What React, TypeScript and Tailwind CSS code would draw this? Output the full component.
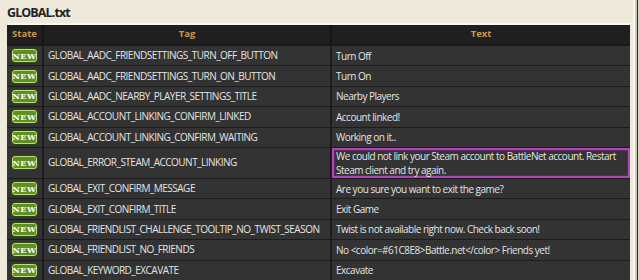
import React from "react";

const rows: { tag: string; text: string; tall?: boolean; hl?: boolean }[] = [
  { tag: "GLOBAL_AADC_FRIENDSETTINGS_TURN_OFF_BUTTON", text: "Turn Off" },
  { tag: "GLOBAL_AADC_FRIENDSETTINGS_TURN_ON_BUTTON", text: "Turn On" },
  { tag: "GLOBAL_AADC_NEARBY_PLAYER_SETTINGS_TITLE", text: "Nearby Players" },
  { tag: "GLOBAL_ACCOUNT_LINKING_CONFIRM_LINKED", text: "Account linked!" },
  { tag: "GLOBAL_ACCOUNT_LINKING_CONFIRM_WAITING", text: "Working on it.." },
  {
    tag: "GLOBAL_ERROR_STEAM_ACCOUNT_LINKING",
    text: "We could not link your Steam account to BattleNet account. Restart Steam client and try again.",
    tall: true,
    hl: true,
  },
  { tag: "GLOBAL_EXIT_CONFIRM_MESSAGE", text: "Are you sure you want to exit the game?" },
  { tag: "GLOBAL_EXIT_CONFIRM_TITLE", text: "Exit Game" },
  { tag: "GLOBAL_FRIENDLIST_CHALLENGE_TOOLTIP_NO_TWIST_SEASON", text: "Twist is not available right now. Check back soon!" },
  { tag: "GLOBAL_FRIENDLIST_NO_FRIENDS", text: "No <color=#61C8E8>Battle.net</color> Friends yet!" },
  { tag: "GLOBAL_KEYWORD_EXCAVATE", text: "Excavate" },
];

function NewBadge() {
  return (
    <span className="inline-flex items-center justify-center h-[13px] w-[25px] rounded-[3px] bg-[#5f8f22] border border-[#b9e07a] shadow-[0_0_0_1px_#2f4a10] text-[8px] font-bold leading-none text-white tracking-[0.5px] font-['DejaVu_Serif',serif]">
      NEW
    </span>
  );
}

export default function App() {
  return (
    <div className="w-[640px] h-[280px] overflow-hidden bg-[#efe9dc] font-['Open_Sans',sans-serif] relative">
      <div className="flex h-full">
        <div className="w-[633px] flex flex-col">
          <div className="pl-[7px] pt-[3px] h-[23px] text-[12.5px] font-bold tracking-[-0.9px] text-[#222] leading-[19px]">GLOBAL.txt</div>
          <div className="h-[2px] bg-[#f8f5ec] ml-[6px]" />
          <div className="ml-[7px] w-[623px] bg-[#333333] text-[10px] tracking-[-0.5px] text-[#e4e4e4]">
            <div className="flex h-[20px] bg-[#1f1f1f] text-[9.5px] tracking-normal font-bold text-[#c99650] border-b border-[#171717]">
              <div className="w-[37px] flex items-center justify-center border-r-2 border-[#151515]">State</div>
              <div className="w-[288px] flex items-center justify-center border-r-2 border-[#151515]">Tag</div>
              <div className="flex-1 flex items-center justify-center">Text</div>
            </div>
            {rows.map((r, i) => (
              <div
                key={i}
                className={`flex border-t border-[#1c1c1c] ${r.tall ? "h-[31px]" : "h-[20.4px]"}`}
              >
                <div className="w-[37px] flex items-center justify-center border-r-2 border-[#1c1c1c]">
                  <NewBadge />
                </div>
                <div className="w-[288px] flex items-center pl-[4px] border-r-2 border-[#1c1c1c] whitespace-nowrap">
                  {r.tag}
                </div>
                <div
                  className={`flex-1 flex items-center leading-[14px] ${
                    r.hl ? "border-2 border-[#b146b8] shadow-[inset_0_0_0_1px_#5a2a5e] pl-[2px] pr-[4px]" : "pl-[4px]"
                  }`}
                >
                  {r.text}
                </div>
              </div>
            ))}
          </div>
        </div>
        <div className="w-[2px] bg-[#fbf8ef]" />
        <div className="w-[2px] bg-[#cfc9bb]" />
        <div className="w-[1px] bg-[#2a2a2a]" />
        <div className="flex-1 bg-[#d9d4c8]" />
      </div>
    </div>
  );
}
